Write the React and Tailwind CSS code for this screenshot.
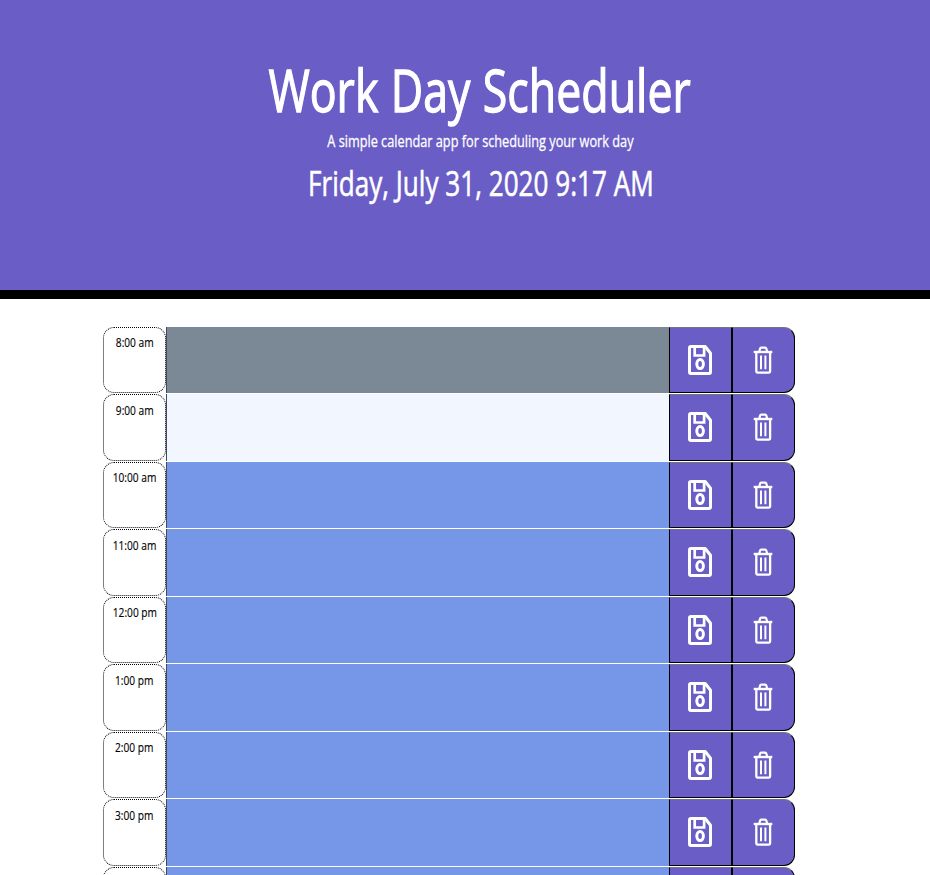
const rows = [
  ["8:00 am", "bg-[#7b8896]"],
  ["9:00 am", "bg-[#f2f7ff]"],
  ["10:00 am", "bg-[#7696e8]"],
  ["11:00 am", "bg-[#7696e8]"],
  ["12:00 pm", "bg-[#7696e8]"],
  ["1:00 pm", "bg-[#7696e8]"],
  ["2:00 pm", "bg-[#7696e8]"],
  ["3:00 pm", "bg-[#7696e8]"],
  ["", "bg-[#7696e8]"],
];

function SaveIcon() {
  return (
    <svg width="24" height="30" viewBox="0 0 24 30" fill="none" stroke="white" strokeLinejoin="round">
      <path d="M3 1.5H17.2L22.5 8.2V27Q22.5 28.5 21 28.5H3Q1.5 28.5 1.5 27V3Q1.5 1.5 3 1.5Z" strokeWidth="3" />
      <path d="M6.7 2V10.5H16.1V2" strokeWidth="2.7" strokeLinejoin="miter" />
      <ellipse cx="12.1" cy="19.1" rx="3.3" ry="4.5" strokeWidth="3" />
    </svg>
  );
}

function TrashIcon() {
  return (
    <svg width="20" height="28" viewBox="-1 0 20 28" fill="none" stroke="white">
      <path d="M-0.3 6H18.3" strokeWidth="2.4" />
      <path d="M5.2 6L6 2.8Q6.3 1.7 7.2 1.7H11.2Q12.1 1.7 12.4 2.8L13.2 6" strokeWidth="2.2" />
      <path d="M2.3 6V25.6Q2.3 26.6 3.3 26.6H15.1Q16.1 26.6 16.1 25.6V6" strokeWidth="2.3" />
      <path d="M7 9.5V23.3M11.4 9.5V23.3" strokeWidth="2" />
    </svg>
  );
}

export default function App() {
  return (
    <div className="h-[875px] w-[930px] overflow-hidden bg-white font-['Open_Sans','Noto_Sans',sans-serif]">
      <header className="flex h-[299px] flex-col items-center border-b-[9px] border-black bg-[#6a5dc5] pl-[30px] pt-[49px] text-white">
        <h1 className="h-[80px] scale-x-[0.758] whitespace-nowrap text-[59px] leading-[80px] [word-spacing:1px] [-webkit-text-stroke:1.3px_white]">Work Day Scheduler</h1>
        <p className="h-6 scale-x-[0.795] whitespace-nowrap pl-[2px] text-[16px] leading-6 [-webkit-text-stroke:0.3px_white]">A simple calendar app for scheduling your work day</p>
        <p className="mt-[9px] h-[42px] scale-x-[0.768] whitespace-nowrap pl-[2px] text-[34px] leading-[42px] [-webkit-text-stroke:0.6px_white]">Friday, July 31, 2020 9:17 AM</p>
      </header>
      <main className="ml-[103px] mt-[27.5px] w-[692px]">
        {rows.map(([time, color], i) => (
          <div key={i} className="flex h-[67.5px] pb-px">
            <div className="flex w-[63px] justify-center rounded-[11px] border border-dotted border-black pt-[4.5px] text-[13.3px] leading-5 text-black">
              {time && <span className="scale-x-[0.765] whitespace-nowrap [-webkit-text-stroke:0.15px_black]">{time}</span>}
            </div>
            <div className={`w-[503px] border-l border-[#444a55] ${color}`} />
            <div className="flex w-[63px] items-center justify-center border border-black border-t-[#77747f] bg-[#6a5dc5] pr-[2px]">
              <SaveIcon />
            </div>
            <div className="flex w-[63px] items-center justify-center rounded-r-[11px] border border-black border-t-[#77747f] bg-[#6a5dc5] pr-[2px]">
              <TrashIcon />
            </div>
          </div>
        ))}
      </main>
    </div>
  );
}
